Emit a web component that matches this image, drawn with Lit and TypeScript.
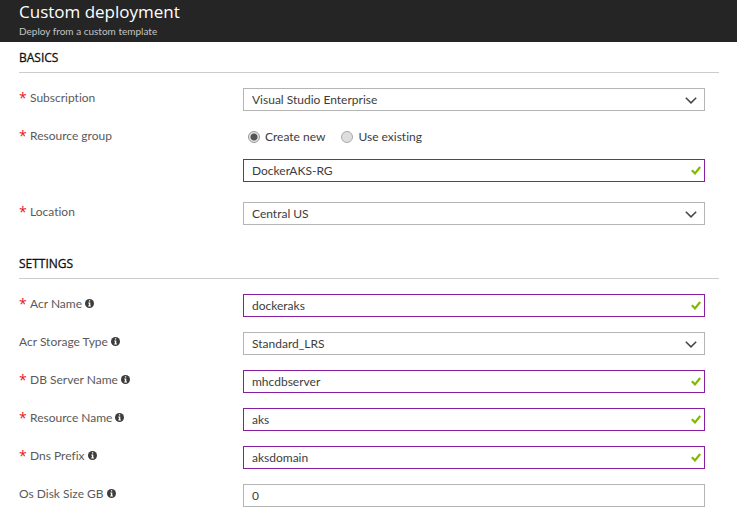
import { LitElement, html, css, nothing } from "lit";
import { customElement } from "lit/decorators.js";

const infoIcon = html`<svg class="info" viewBox="0 0 9 9" aria-hidden="true">
  <circle cx="4.5" cy="4.5" r="4.5" fill="#3c3c3c"></circle>
  <path d="M3.9 1.3h1.3v1.3H3.9zM3.3 3.5h2v3h.6v.9H3.2v-.9h.7V4.4h-.6z" fill="#fff"></path>
</svg>`;

const checkIcon = html`<svg class="check" viewBox="0 0 10 9" aria-hidden="true">
  <path d="M.8 4.2L4 7.4 9.2 1" fill="none" stroke="#7fba00" stroke-width="2.2"></path>
</svg>`;

const chevronIcon = html`<svg class="chevron" viewBox="0 0 12 7" aria-hidden="true">
  <path d="M.8 .8L6 5.9 11.2 .8" fill="none" stroke="#444" stroke-width="1.5"></path>
</svg>`;

interface Field {
  id: string;
  label: string;
  value: string;
  kind: "text" | "select";
  required?: boolean;
  info?: boolean;
  valid?: boolean;
}

const settings: Field[] = [
  { id: "acr-name", label: "Acr Name", value: "dockeraks", kind: "text", required: true, info: true, valid: true },
  { id: "acr-storage", label: "Acr Storage Type", value: "Standard_LRS", kind: "select", info: true },
  { id: "db-server", label: "DB Server Name", value: "mhcdbserver", kind: "text", required: true, info: true, valid: true },
  { id: "resource-name", label: "Resource Name", value: "aks", kind: "text", required: true, info: true, valid: true },
  { id: "dns-prefix", label: "Dns Prefix", value: "aksdomain", kind: "text", required: true, info: true, valid: true },
  { id: "disk-size", label: "Os Disk Size GB", value: "0", kind: "text", info: true },
];

@customElement("app-root")
export class AppRoot extends LitElement {
  static styles = css`
    :host {
      display: block;
      min-height: 100vh;
      background: #fff;
      color: #5a5a5a;
      font-family: Lato, "Open Sans", sans-serif;
      font-size: 12px;
      line-height: 20px;
      font-variant-ligatures: none;
    }
    .header {
      background: #252525;
      color: #fff;
      padding: 0 19px 4px;
    }
    .title {
      margin: 0;
      font-family: "Open Sans", sans-serif;
      font-size: 17px;
      line-height: 24px;
      font-weight: 400;
    }
    .subtitle {
      margin: 0;
      font-size: 10px;
      line-height: 14px;
      color: #c4c4c4;
    }
    .section {
      padding: 8px 18px 23px 19px;
    }
    .section:last-child {
      padding-bottom: 0;
    }
    .heading {
      margin: 0;
      padding-bottom: 6px;
      border-bottom: 1px solid #ccc;
      font-family: "Open Sans", sans-serif;
      font-size: 12px;
      line-height: 16px;
      font-weight: 400;
      color: #111;
      -webkit-text-stroke: 0.3px #111;
    }
    .rows {
      display: flex;
      flex-direction: column;
      gap: 15px;
      padding: 15px 14px 0 0;
    }
    .row {
      display: grid;
      grid-template-columns: 224px minmax(0, 1fr);
      align-items: start;
    }
    .row.group {
      padding-bottom: 5px;
    }
    .label {
      display: flex;
      align-items: center;
    }
    .star {
      width: 11px;
      color: #e81123;
      font-family: "Open Sans", sans-serif;
      font-size: 14px;
    }
    .info {
      width: 9px;
      height: 9px;
      margin: 0 0 1px 3px;
    }
    .stack {
      display: flex;
      flex-direction: column;
      gap: 10px;
    }
    .radios {
      display: flex;
      gap: 16px;
      height: 22px;
      padding: 0 0 1px 5px;
    }
    .option {
      display: flex;
      align-items: center;
      gap: 5px;
      color: #3c3c3c;
    }
    .radio {
      appearance: none;
      box-sizing: border-box;
      width: 12px;
      height: 12px;
      margin: 0;
      border: 1px solid #aaa;
      border-radius: 50%;
      background: #dedede;
    }
    .radio:checked {
      border-color: #999;
      background: radial-gradient(circle, #555 0 3px, #e2e2e2 4px);
    }
    .field {
      position: relative;
      display: flex;
    }
    .control {
      appearance: none;
      box-sizing: border-box;
      width: 100%;
      height: 23px;
      margin: 0;
      padding: 0 28px 0 8px;
      border: 1px solid #b5b5b5;
      border-radius: 0;
      background: #fff;
      color: #3c3c3c;
      font: inherit;
      outline: none;
    }
    .control.valid {
      border-color: #881fa3;
    }
    .check,
    .chevron {
      position: absolute;
      pointer-events: none;
    }
    .check {
      width: 10px;
      height: 9px;
      right: 4px;
      top: 7px;
    }
    .chevron {
      width: 12px;
      height: 7px;
      right: 8px;
      top: 9px;
    }
  `;

  private label(f: Field, target = true) {
    const body = html`${f.required ? html`<span class="star">*</span>` : nothing}${f.label}${f.info ? infoIcon : nothing}`;
    return target
      ? html`<label class="label" for=${f.id}>${body}</label>`
      : html`<span class="label" id="${f.id}-label">${body}</span>`;
  }

  private control(f: Field, name?: string) {
    return html`<div class="field">
      ${f.kind === "select"
        ? html`<select class="control" id=${f.id}><option>${f.value}</option></select>${chevronIcon}`
        : html`<input class="control ${f.valid ? "valid" : ""}" id=${f.id} type="text" .value=${f.value}
              aria-label=${name ?? nothing} />${f.valid ? checkIcon : nothing}`}
    </div>`;
  }

  private row(f: Field) {
    return html`<div class="row">${this.label(f)}${this.control(f)}</div>`;
  }

  render() {
    const group: Field = { id: "group", label: "Resource group", value: "DockerAKS-RG", kind: "text", required: true, valid: true };
    return html`
      <header class="header">
        <h1 class="title">Custom deployment</h1>
        <p class="subtitle">Deploy from a custom template</p>
      </header>
      <section class="section">
        <h2 class="heading">BASICS</h2>
        <div class="rows">
          ${this.row({ id: "subscription", label: "Subscription", value: "Visual Studio Enterprise", kind: "select", required: true })}
          <div class="row group">
            ${this.label(group, false)}
            <div class="stack">
              <div class="radios" role="radiogroup" aria-labelledby="group-label">
                <label class="option"><input class="radio" type="radio" name="mode" checked />Create new</label>
                <label class="option"><input class="radio" type="radio" name="mode" />Use existing</label>
              </div>
              ${this.control(group, "Resource group name")}
            </div>
          </div>
          ${this.row({ id: "location", label: "Location", value: "Central US", kind: "select", required: true })}
        </div>
      </section>
      <section class="section">
        <h2 class="heading">SETTINGS</h2>
        <div class="rows">${settings.map((f) => this.row(f))}</div>
      </section>
    `;
  }
}
